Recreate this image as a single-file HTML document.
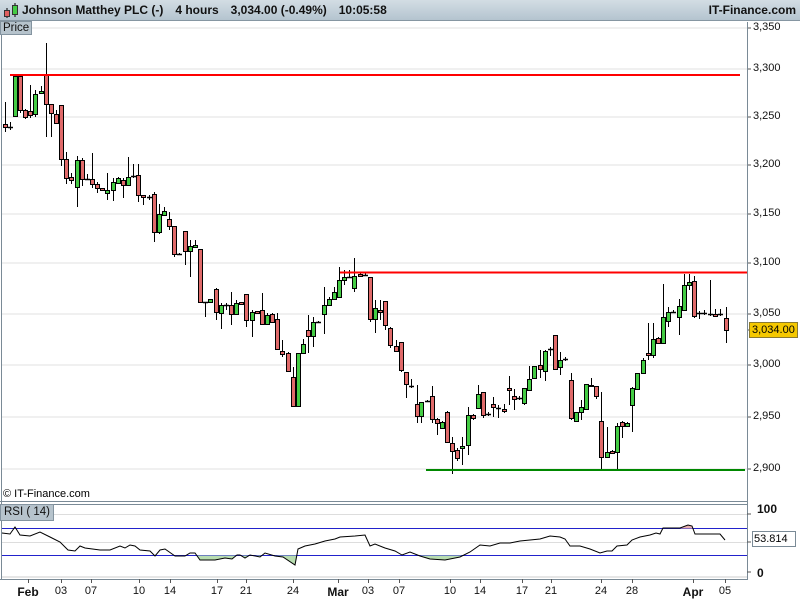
<!DOCTYPE html>
<html><head><meta charset="utf-8">
<style>
*{margin:0;padding:0;box-sizing:border-box}
body{width:800px;height:600px;overflow:hidden;background:#fff;font-family:"Liberation Sans",Arial,sans-serif;position:relative}
#hdr{position:absolute;left:0;top:0;width:800px;height:21px;background:linear-gradient(#d3dde4,#b4c4cf);border-bottom:1px solid #8696a2}
#hdr .t{position:absolute;left:22px;top:3px;font-size:12px;font-weight:bold;color:#111;white-space:nowrap}
#hdr .t span{margin-right:12px}
#hdr .r{position:absolute;right:4px;top:3px;font-size:12px;font-weight:bold;color:#111}
.tag{position:absolute;background:#b6c3cc;border:1px solid #8494a0;font-size:11.5px;color:#111;padding:0 2px;line-height:13px}
.ax{position:absolute;font-size:11px;color:#111}
.bx{position:absolute;font-size:11px;color:#111;top:585px;transform:translateX(-50%)}
</style></head><body>
<div id="hdr">
<svg style="position:absolute;left:2px;top:2px" width="18" height="17"><line x1="5" y1="6" x2="5" y2="16" stroke="#000"/><rect x="2.5" y="8.5" width="5" height="6" fill="#e06060" stroke="#333"/><line x1="13" y1="1" x2="13" y2="15" stroke="#000"/><rect x="10.5" y="3.5" width="5" height="9" fill="#44cc44" stroke="#333"/></svg>
<div class="t"><span>Johnson Matthey PLC (-)</span><span>4 hours</span><span>3,034.00 (-0.49%)</span><span>10:05:58</span></div>
<div class="r">IT-Finance.com</div>
</div>
<svg id="c" style="position:absolute;left:0;top:0" width="800" height="600"></svg>
<div class="tag" style="left:0;top:21px;height:14px">Price</div>
<div class="tag" style="left:0;top:504px;font-size:11.5px;padding:1px 3px">RSI ( 14)</div>
<div style="position:absolute;left:3px;top:488px;font-size:11px">© IT-Finance.com</div>
<div id="lbl"></div>
<div style="position:absolute;left:749px;top:322px;width:49px;height:16px;background:#f5c800;border:1px solid #8a7a30;font-size:11px;line-height:14px;padding-left:2px">3,034.00</div>
<div style="position:absolute;left:752px;top:531px;width:44px;height:16px;background:#fff;border:1px solid #7a8a96;font-size:11px;line-height:14px;padding-left:1px">53.814</div>
<div class="ax" style="left:757px;top:502px;font-weight:bold;font-size:12px">100</div>
<div class="ax" style="left:757px;top:566px;font-weight:bold;font-size:12px">0</div>
<script>
var svg=document.getElementById('c'),h='';
var grid=[[28,'3,350'],[69,'3,300'],[117,'3,250'],[165,'3,200'],[214,'3,150'],[263,'3,100'],[314,'3,050'],[365,'3,000'],[417,'2,950'],[469,'2,900']];
var L='';
grid.forEach(function(g){h+='<line x1="2" y1="'+g[0]+'" x2="747" y2="'+g[0]+'" stroke="#e2e2e2"/>';h+='<line x1="747" y1="'+g[0]+'" x2="751" y2="'+g[0]+'" stroke="#555"/>';L+='<div class="ax" style="left:753px;top:'+(g[0]-7)+'px">'+g[1]+'</div>';});
h+='<line x1="747" y1="330" x2="751" y2="330" stroke="#555"/>';
h+='<line x1="1.5" y1="22" x2="1.5" y2="580" stroke="#7a8a96"/>';
h+='<line x1="747.5" y1="22" x2="747.5" y2="580" stroke="#7a8a96"/>';
h+='<line x1="0" y1="501.5" x2="748" y2="501.5" stroke="#7a8a96"/>';
h+='<line x1="0" y1="504.5" x2="748" y2="504.5" stroke="#7a8a96"/>';
h+='<line x1="0" y1="579.5" x2="748" y2="579.5" stroke="#7a8a96"/>';
var C=[[5,124,127,102,132,'r'],[10,127,127,122,130,'r'],[15,76,116,76,116,'g'],[20,76,110,76,113,'r'],[25,110,117,109,119,'r'],[30,111,115,85,118,'r'],[35,94,114,90,117,'g'],[41,91,93,86,94,'g'],[46,75,104,43,137,'r'],[51,104,113,104,137,'r'],[56,114,123,110,124,'r'],[61,105,159,105,166,'r'],[66,159,178,152,184,'r'],[71,177,180,173,184,'r'],[77,160,187,156,207,'g'],[82,160,179,158,186,'r'],[87,179,179,174,180,'r'],[92,179,184,153,188,'r'],[97,184,188,182,193,'r'],[102,188,190,188,191,'r'],[107,190,193,173,200,'g'],[113,182,190,178,201,'g'],[118,178,183,177,184,'g'],[123,180,185,178,198,'r'],[128,177,185,157,186,'g'],[133,176,176,164,178,'g'],[138,175,195,164,202,'r'],[143,195,197,195,205,'r'],[149,197,197,195,200,'r'],[154,194,232,192,242,'r'],[159,214,232,204,234,'g'],[164,211,215,207,216,'g'],[169,219,226,212,230,'r'],[174,226,254,226,257,'r'],[179,254,254,253,255,'r'],[185,231,251,231,265,'r'],[190,246,251,240,277,'g'],[195,245,247,240,248,'g'],[200,249,302,249,302,'r'],[205,302,302,302,317,'r'],[210,299,302,299,303,'g'],[216,289,312,288,320,'r'],[221,305,313,303,329,'g'],[226,305,305,303,310,'r'],[231,305,314,292,325,'r'],[236,303,314,300,315,'g'],[241,302,304,302,305,'r'],[246,294,320,294,327,'r'],[252,312,320,310,337,'g'],[257,311,313,311,314,'r'],[262,310,324,293,325,'r'],[267,315,324,313,325,'g'],[272,314,322,313,323,'r'],[277,319,349,313,350,'r'],[282,351,354,340,357,'r'],[288,353,371,352,372,'r'],[293,377,406,367,407,'r'],[298,353,406,353,407,'g'],[303,344,353,339,354,'g'],[308,330,336,315,353,'r'],[313,322,336,317,347,'g'],[318,322,322,321,323,'g'],[324,305,314,287,334,'g'],[329,299,305,297,306,'g'],[334,292,299,287,300,'g'],[339,280,297,267,298,'g'],[344,277,280,270,285,'g'],[349,277,277,270,278,'g'],[354,276,288,258,292,'g'],[360,274,276,273,277,'r'],[365,275,275,273,276,'r'],[370,277,319,277,322,'r'],[375,308,319,300,333,'g'],[380,310,312,300,320,'r'],
[385,301,325,301,330,'r'],[390,328,345,327,348,'r'],[396,346,351,340,352,'r'],[401,342,370,342,372,'r'],[406,372,384,372,398,'r'],[411,386,386,379,388,'r'],[417,404,416,385,423,'r'],[421,402,416,402,423,'g'],[427,401,401,400,402,'g'],[432,396,419,386,423,'r'],[437,419,423,418,435,'r'],[442,422,428,421,429,'g'],[447,412,442,411,442,'r'],[452,443,451,437,474,'r'],[457,450,458,448,461,'r'],[462,446,448,437,465,'g'],[468,415,445,407,455,'g'],[473,415,418,414,420,'r'],[478,394,408,385,409,'g'],[483,392,415,392,418,'r'],[488,414,414,412,416,'r'],[493,404,407,397,417,'r'],[498,408,408,405,418,'r'],[504,409,411,404,413,'r'],[509,388,390,376,405,'r'],[514,396,399,389,410,'r'],[519,398,398,396,400,'r'],[524,388,403,388,405,'g'],[529,379,390,366,391,'g'],[534,366,378,366,379,'g'],[540,365,369,350,378,'r'],[545,351,371,350,381,'g'],[550,349,349,347,356,'g'],[555,335,369,335,370,'r'],[560,360,367,352,375,'g'],[565,359,359,357,361,'g'],[571,380,418,373,420,'r'],[576,412,421,412,422,'g'],[581,407,412,400,420,'g'],[586,384,409,384,410,'g'],[591,385,386,378,387,'r'],[596,386,396,386,399,'r'],[601,421,457,392,470,'r'],[607,452,457,427,458,'g'],[612,451,453,450,454,'r'],[617,426,452,423,470,'g'],[622,422,426,421,438,'r'],[627,423,426,422,427,'g'],[632,388,405,387,432,'g'],[637,373,389,373,390,'g'],[643,360,373,358,374,'g'],[648,353,355,323,360,'r'],[653,339,355,323,358,'g'],[658,338,343,337,344,'r'],[663,317,343,284,344,'g'],[668,312,321,307,327,'g'],[673,312,312,310,313,'g'],[679,306,317,299,335,'g'],[684,285,310,274,311,'g'],[689,282,285,274,290,'g'],[694,281,316,276,318,'r'],[699,313,313,311,319,'r'],[704,313,313,310,315,'r'],[710,314,314,280,316,'r'],[715,314,316,309,317,'r'],[720,314,314,309,316,'g'],[726,318,330,307,343,'r']];
C.forEach(function(c){var x=c[0];h+='<line x1="'+(x+.5)+'" y1="'+c[3]+'" x2="'+(x+.5)+'" y2="'+c[4]+'" stroke="#000"/>';
var t=c[1],b=c[2];if(b-t<1){h+='<line x1="'+(x-2)+'" y1="'+(t+.5)+'" x2="'+(x+3)+'" y2="'+(t+.5)+'" stroke="#000" stroke-width="1.5"/>';}
else h+='<rect x="'+(x-1.5)+'" y="'+(t+.5)+'" width="4" height="'+(b-t)+'" fill="'+(c[5]=='g'?'#44cc44':'#e06a6a')+'" stroke="#000"/>';});
h+='<line x1="10" y1="75" x2="740" y2="75" stroke="#f00" stroke-width="2"/>';
h+='<line x1="340" y1="272.5" x2="747" y2="272.5" stroke="#f00" stroke-width="2"/>';
h+='<line x1="426" y1="470" x2="745" y2="470" stroke="#080" stroke-width="2"/>';
h+='<line x1="2" y1="514.5" x2="747" y2="514.5" stroke="#ddd"/><line x1="2" y1="542.5" x2="747" y2="542.5" stroke="#ddd"/><line x1="2" y1="577" x2="747" y2="577" stroke="#ccc"/>';
h+='<line x1="2" y1="528.5" x2="747" y2="528.5" stroke="#2222cc"/><line x1="2" y1="555.5" x2="747" y2="555.5" stroke="#2222cc"/>';
h+='<line x1="747" y1="514" x2="751" y2="514" stroke="#555"/><line x1="747" y1="542" x2="751" y2="542" stroke="#555"/><line x1="747" y1="572" x2="751" y2="572" stroke="#555"/>';
var R='2,533 10,534 15,527 20,535 30,536 40,532 50,537 60,542 68,550 75,551 80,546 85,548 100,550 110,550 120,546 125,548 130,545 135,546 140,550 150,551 155,556 160,550 165,549 175,556 185,556 190,553 195,553 200,560 215,560 225,558 232,559 237,555 240,555 245,558 250,555 260,557 265,553 275,556 283,557 295,565 298,549 305,546 315,544 325,541 335,539 340,537 355,536 365,535 370,546 375,544 385,548 395,551 402,555 410,552 420,556 430,559 445,560 460,557 470,552 480,545 490,546 500,543 510,543 520,541 530,540 540,539 550,536 560,537 565,539 570,546 580,546 590,549 600,553 607,551 612,551 617,546 627,545 632,540 640,537 650,535 656,533 660,534 663,528 680,528 688,525 692,526 695,534 720,534 725,540';
h+='<defs><clipPath id="lo"><rect x="0" y="555.5" width="748" height="30"/></clipPath><clipPath id="hi"><rect x="0" y="500" width="748" height="28.5"/></clipPath></defs>';
h+='<polygon points="2,555.5 '+R+' 725,555.5" fill="#b8ddb0" clip-path="url(#lo)" stroke="none"/>';
h+='<polygon points="2,528.5 '+R+' 725,528.5" fill="#e8b0b0" clip-path="url(#hi)" stroke="none"/>';
h+='<polyline points="'+R+'" fill="none" stroke="#000"/>';
var X=[[28,'Feb',1],[61,'03'],[91,'07'],[139,'10'],[170,'14'],[217,'17'],[246,'21'],[293,'24'],[338,'Mar',1],[368,'03'],[399,'07'],[450,'10'],[480,'14'],[522,'17'],[551,'21'],[601,'24'],[632,'28'],[693,'Apr',1],[725,'05']];
X.forEach(function(a){h+='<line x1="'+(a[0]+.5)+'" y1="579" x2="'+(a[0]+.5)+'" y2="583" stroke="#555"/>';L+='<div class="bx" style="left:'+a[0]+'px;'+(a[2]?'font-weight:bold;font-size:12px':'')+'">'+a[1]+'</div>';});
svg.innerHTML=h;document.getElementById('lbl').innerHTML=L;
</script>
</body></html>
